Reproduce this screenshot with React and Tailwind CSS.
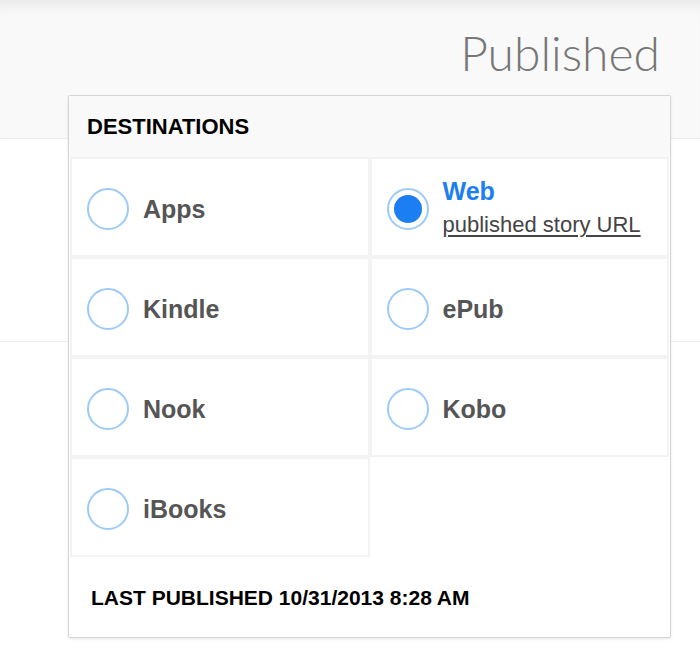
import React from 'react'

const ITEMS = [
  { name: 'Apps' },
  { name: 'Web', selected: true, link: 'published story URL' },
  { name: 'Kindle' },
  { name: 'ePub' },
  { name: 'Nook' },
  { name: 'Kobo' },
  { name: 'iBooks' },
]

function Radio({ checked }) {
  return (
    <span className="flex h-[42px] w-[42px] shrink-0 items-center justify-center rounded-full border-2 border-[#9ccaf9] bg-white">
      {checked && <span className="h-[28px] w-[28px] rounded-full bg-[#1b7ef2]" />}
    </span>
  )
}

function Destination({ item }) {
  return (
    <div className="flex h-[100px] items-center gap-[14px] border-2 border-[#f3f3f3] bg-white pl-[15px] pt-[4px]">
      <Radio checked={item.selected} />
      {item.link ? (
        <div className="-mt-[4px] flex flex-col">
          <span className="text-[25px] leading-[30px] font-bold text-[#1b7ef2]">{item.name}</span>
          <a className="mt-[6px] text-[22px] leading-[26px] text-[#444] underline decoration-[#444] decoration-2 underline-offset-[3px]">
            {item.link}
          </a>
        </div>
      ) : (
        <span className="text-[25px] leading-[30px] font-bold text-[#555]">{item.name}</span>
      )}
    </div>
  )
}

export default function App() {
  return (
    <div className="relative h-[672px] w-[700px] overflow-hidden bg-white font-['Liberation_Sans',Arial,sans-serif]">
      {/* top bar */}
      <div className="flex h-[139px] items-start justify-end border-b border-[#ececec] bg-[#f9f9f9] pr-[40px] pt-[25px] shadow-[inset_0_14px_14px_-10px_rgba(0,0,0,0.08)]">
        <h1 className="font-['Lato','Open_Sans',sans-serif] text-[48px] leading-[56px] font-light text-[#777]">Published</h1>
      </div>
      <div className="h-[203px] border-b border-[#eeeeee]" />

      {/* destinations popover */}
      <div className="absolute left-[68px] top-[95px] w-[603px] rounded-[2px] border border-[#d6d6d6] bg-white shadow-[0_1px_3px_rgba(0,0,0,0.1)]">
        <div className="flex h-[61px] items-center bg-[#f9f9f9] px-[18px]">
          <span className="text-[22px] font-bold leading-none text-black">DESTINATIONS</span>
        </div>
        <div className="grid grid-cols-2 px-px">
          {ITEMS.map(item => (
            <Destination key={item.name} item={item} />
          ))}
        </div>
        <div className="flex h-[80px] items-center px-[22px]">
          <span className="text-[21px] font-bold leading-none text-black">LAST PUBLISHED 10/31/2013 8:28 AM</span>
        </div>
      </div>
    </div>
  )
}
